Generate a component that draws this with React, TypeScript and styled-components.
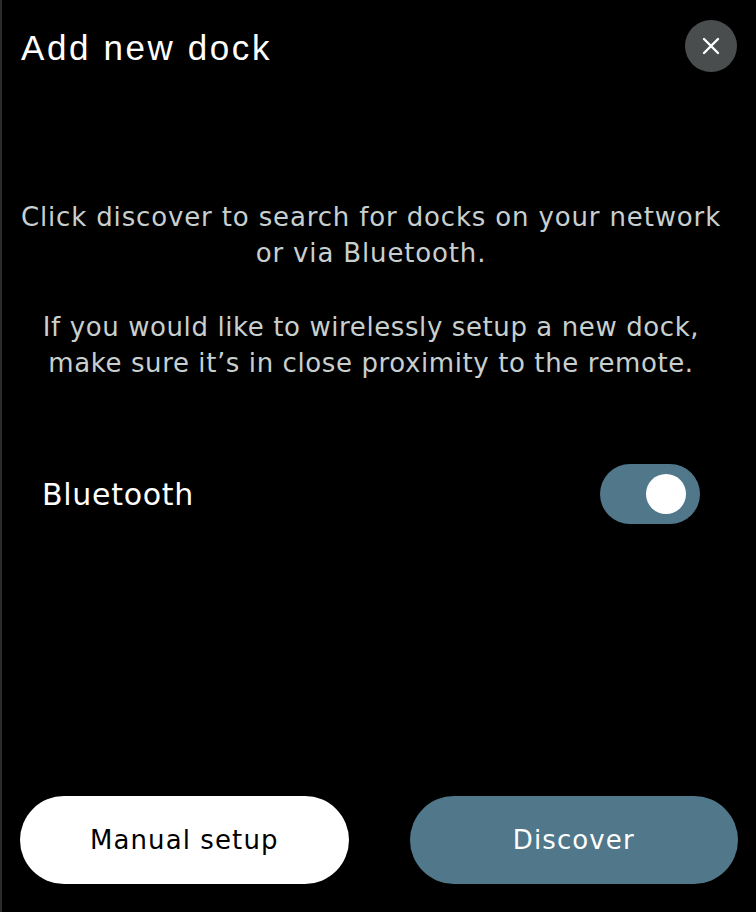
import React, { useState } from 'react'
import styled, { createGlobalStyle } from 'styled-components'

const GlobalStyle = createGlobalStyle`
  html, body {
    margin: 0;
    padding: 0;
    background: #000;
  }
  * {
    box-sizing: border-box;
  }
`

const bodyFont = `"DejaVu Sans", "Noto Sans", sans-serif`

const Dialog = styled.div`
  height: 100vh;
  display: flex;
  flex-direction: column;
  background: #000;
  border-left: 2px solid #2b2b2b;
  font-family: ${bodyFont};
`

const Header = styled.header`
  display: flex;
  align-items: center;
  justify-content: space-between;
  padding: 20px 19px 0 19px;
`

const Title = styled.h1`
  margin: 0;
  padding-top: 4px;
  font-family: "Liberation Sans", Arial, sans-serif;
  font-weight: 400;
  font-size: 35px;
  letter-spacing: 2.6px;
  color: #fff;
`

const CloseButton = styled.button`
  width: 52px;
  height: 52px;
  border-radius: 50%;
  border: none;
  background: #4a4d4e;
  display: flex;
  align-items: center;
  justify-content: center;
  padding: 0;
  cursor: pointer;
`

const Message = styled.div`
  margin-top: 127px;
  padding: 0 16px 0 0;
  text-align: center;
`

const Paragraph = styled.p`
  margin: 0;
  font-size: 26px;
  line-height: 36px;
  letter-spacing: 0.85px;
  color: #c8cfcf;

  & + & {
    margin-top: 38px;
    letter-spacing: 0.6px;
  }
`

const SettingRow = styled.div`
  display: flex;
  align-items: center;
  justify-content: space-between;
  margin-top: 83px;
  padding: 0 56px 0 40px;
`

const SettingLabel = styled.span`
  font-size: 30px;
  letter-spacing: 0.7px;
  color: #fff;
`

const Toggle = styled.button<{ $on: boolean }>`
  position: relative;
  width: 100px;
  height: 60px;
  border-radius: 30px;
  border: none;
  padding: 0;
  background: ${p => (p.$on ? '#50788a' : '#3a3a3a')};
  cursor: pointer;

  &::after {
    content: '';
    position: absolute;
    top: 10px;
    left: ${p => (p.$on ? '46px' : '10px')};
    width: 40px;
    height: 40px;
    border-radius: 50%;
    background: #fff;
  }
`

const Spacer = styled.div`
  flex: 1;
`

const Footer = styled.footer`
  display: grid;
  grid-template-columns: 1fr 1fr;
  gap: 61px;
  padding: 0 18px 28px 18px;
`

const PillButton = styled.button<{ $primary?: boolean }>`
  height: 88px;
  border-radius: 44px;
  border: none;
  font-family: ${bodyFont};
  font-size: 26px;
  letter-spacing: 1.1px;
  background: ${p => (p.$primary ? '#50788a' : '#fff')};
  color: ${p => (p.$primary ? '#fff' : '#000')};
  cursor: pointer;
`

export default function App() {
  const [bluetooth, setBluetooth] = useState(true)

  return (
    <>
      <GlobalStyle />
      <Dialog>
        <Header>
          <Title>Add new dock</Title>
          <CloseButton aria-label="Close">
            <svg width="18" height="18" viewBox="0 0 18 18">
              <path d="M2 2 L16 16 M16 2 L2 16" stroke="#fff" strokeWidth="2.4" strokeLinecap="round" />
            </svg>
          </CloseButton>
        </Header>
        <Message>
          <Paragraph>
            Click discover to search for docks on your network
            <br />
            or via Bluetooth.
          </Paragraph>
          <Paragraph>
            If you would like to wirelessly setup a new dock,
            <br />
            make sure it’s in close proximity to the remote.
          </Paragraph>
        </Message>
        <SettingRow>
          <SettingLabel>Bluetooth</SettingLabel>
          <Toggle $on={bluetooth} aria-label="Bluetooth" onClick={() => setBluetooth(!bluetooth)} />
        </SettingRow>
        <Spacer />
        <Footer>
          <PillButton>Manual setup</PillButton>
          <PillButton $primary>Discover</PillButton>
        </Footer>
      </Dialog>
    </>
  )
}
